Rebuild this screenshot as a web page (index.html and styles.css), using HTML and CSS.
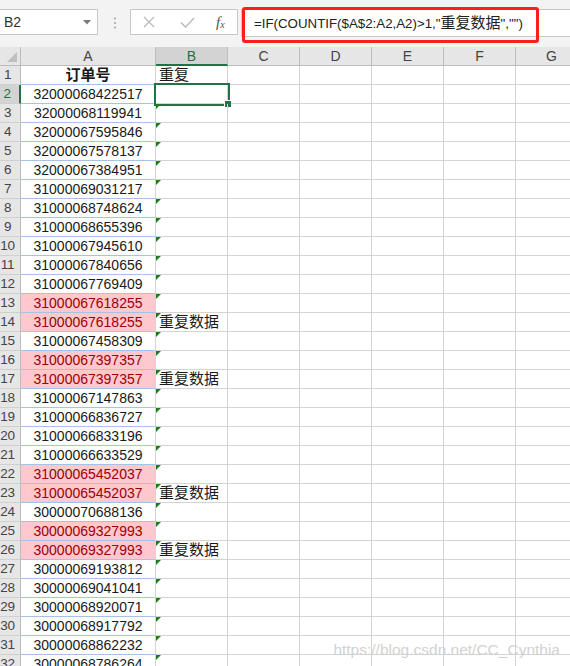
FILE: index.html
```html
<!DOCTYPE html>
<html lang="zh">
<head>
<meta charset="utf-8">
<title>Excel</title>
<link rel="stylesheet" href="styles.css">
</head>
<body>
<div class="app">
  <div class="toolbar">
    <div class="namebox">
      <span>B2</span>
      <svg class="caret" width="8" height="5" viewBox="0 0 8 5"><polygon points="0,0 8,0 4,4.5" fill="#7a7a7a"/></svg>
    </div>
    <svg class="dots" width="4" height="12" viewBox="0 0 4 12"><circle cx="2" cy="1.5" r="1.1" fill="#a8a8a8"/><circle cx="2" cy="6" r="1.1" fill="#a8a8a8"/><circle cx="2" cy="10.5" r="1.1" fill="#a8a8a8"/></svg>
    <div class="actions">
      <svg class="ico" width="12" height="12" viewBox="0 0 12 12"><path d="M1 1 L11 11 M11 1 L1 11" stroke="#bdbdbd" stroke-width="1.4" fill="none"/></svg>
      <svg class="ico" width="15" height="11" viewBox="0 0 15 11"><path d="M1 5.5 L5.5 10 L14 1" stroke="#bdbdbd" stroke-width="1.5" fill="none"/></svg>
      <span class="fx">f<sub>x</sub></span>
    </div>
    <div class="formula">=IF(COUNTIF($A$2:A2,A2)&gt;1,"<span class="cjk">重复数据</span>","")</div>
    <div class="annot"></div>
  </div>

  <div class="sheet">
    <div class="r hdr"><div class="h corner"></div><div class="a">A</div><div class="b on">B</div><i>C</i><i>D</i><i>E</i><i>F</i><i>G</i></div>
    <div class="r"><div class="h">1</div><div class="a title">订单号</div><div class="b">重复</div><i></i><i></i><i></i><i></i><i></i></div>
    <div class="r"><div class="h on">2</div><div class="a">32000068422517</div><div class="b sel"></div><i></i><i></i><i></i><i></i><i></i></div>
    <div class="r"><div class="h">3</div><div class="a">32000068119941</div><div class="b t"></div><i></i><i></i><i></i><i></i><i></i></div>
    <div class="r"><div class="h">4</div><div class="a">32000067595846</div><div class="b t"></div><i></i><i></i><i></i><i></i><i></i></div>
    <div class="r"><div class="h">5</div><div class="a">32000067578137</div><div class="b t"></div><i></i><i></i><i></i><i></i><i></i></div>
    <div class="r"><div class="h">6</div><div class="a">32000067384951</div><div class="b t"></div><i></i><i></i><i></i><i></i><i></i></div>
    <div class="r"><div class="h">7</div><div class="a">31000069031217</div><div class="b t"></div><i></i><i></i><i></i><i></i><i></i></div>
    <div class="r"><div class="h">8</div><div class="a">31000068748624</div><div class="b t"></div><i></i><i></i><i></i><i></i><i></i></div>
    <div class="r"><div class="h">9</div><div class="a">31000068655396</div><div class="b t"></div><i></i><i></i><i></i><i></i><i></i></div>
    <div class="r"><div class="h">10</div><div class="a">31000067945610</div><div class="b t"></div><i></i><i></i><i></i><i></i><i></i></div>
    <div class="r"><div class="h">11</div><div class="a">31000067840656</div><div class="b t"></div><i></i><i></i><i></i><i></i><i></i></div>
    <div class="r"><div class="h">12</div><div class="a">31000067769409</div><div class="b t"></div><i></i><i></i><i></i><i></i><i></i></div>
    <div class="r"><div class="h">13</div><div class="a dup">31000067618255</div><div class="b t"></div><i></i><i></i><i></i><i></i><i></i></div>
    <div class="r"><div class="h">14</div><div class="a dup">31000067618255</div><div class="b t">重复数据</div><i></i><i></i><i></i><i></i><i></i></div>
    <div class="r"><div class="h">15</div><div class="a">31000067458309</div><div class="b t"></div><i></i><i></i><i></i><i></i><i></i></div>
    <div class="r"><div class="h">16</div><div class="a dup">31000067397357</div><div class="b t"></div><i></i><i></i><i></i><i></i><i></i></div>
    <div class="r"><div class="h">17</div><div class="a dup">31000067397357</div><div class="b t">重复数据</div><i></i><i></i><i></i><i></i><i></i></div>
    <div class="r"><div class="h">18</div><div class="a">31000067147863</div><div class="b t"></div><i></i><i></i><i></i><i></i><i></i></div>
    <div class="r"><div class="h">19</div><div class="a">31000066836727</div><div class="b t"></div><i></i><i></i><i></i><i></i><i></i></div>
    <div class="r"><div class="h">20</div><div class="a">31000066833196</div><div class="b t"></div><i></i><i></i><i></i><i></i><i></i></div>
    <div class="r"><div class="h">21</div><div class="a">31000066633529</div><div class="b t"></div><i></i><i></i><i></i><i></i><i></i></div>
    <div class="r"><div class="h">22</div><div class="a dup">31000065452037</div><div class="b t"></div><i></i><i></i><i></i><i></i><i></i></div>
    <div class="r"><div class="h">23</div><div class="a dup">31000065452037</div><div class="b t">重复数据</div><i></i><i></i><i></i><i></i><i></i></div>
    <div class="r"><div class="h">24</div><div class="a">30000070688136</div><div class="b t"></div><i></i><i></i><i></i><i></i><i></i></div>
    <div class="r"><div class="h">25</div><div class="a dup">30000069327993</div><div class="b t"></div><i></i><i></i><i></i><i></i><i></i></div>
    <div class="r"><div class="h">26</div><div class="a dup">30000069327993</div><div class="b t">重复数据</div><i></i><i></i><i></i><i></i><i></i></div>
    <div class="r"><div class="h">27</div><div class="a">30000069193812</div><div class="b t"></div><i></i><i></i><i></i><i></i><i></i></div>
    <div class="r"><div class="h">28</div><div class="a">30000069041041</div><div class="b t"></div><i></i><i></i><i></i><i></i><i></i></div>
    <div class="r"><div class="h">29</div><div class="a">30000068920071</div><div class="b t"></div><i></i><i></i><i></i><i></i><i></i></div>
    <div class="r"><div class="h">30</div><div class="a">30000068917792</div><div class="b t"></div><i></i><i></i><i></i><i></i><i></i></div>
    <div class="r"><div class="h">31</div><div class="a">30000068862232</div><div class="b t"></div><i></i><i></i><i></i><i></i><i></i></div>
    <div class="r"><div class="h">32</div><div class="a">30000068786264</div><div class="b t"></div><i></i><i></i><i></i><i></i><i></i></div>
  </div>

  <div class="watermark">https://blog.csdn.net/CC_Cynthia</div>
</div>
</body>
</html>
```

FILE: styles.css
```css
html, body {
  margin: 0;
  padding: 0;
  background: #ffffff;
}
body {
  font-family: "Liberation Sans", "Noto Sans CJK SC", sans-serif;
  color: #222;
}
.app {
  position: relative;
  width: 570px;
  height: 666px;
  overflow: hidden;
}

/* formula bar */
.toolbar {
  position: relative;
  height: 47px;
  box-sizing: border-box;
  padding-top: 9px;
  background: #f3f3f3;
  display: flex;
  align-items: flex-start;
}
.namebox {
  width: 98px;
  height: 26px;
  box-sizing: border-box;
  background: #fff;
  border: 1px solid #c8c8c8;
  border-left: none;
  display: flex;
  align-items: center;
  justify-content: space-between;
  padding: 0 6px 0 4px;
  font-size: 14px;
  color: #333;
}
.caret { margin-top: 1px; }
.dots {
  margin: 8px 0 0 15px;
}
.actions {
  margin-left: 13px;
  width: 108px;
  height: 26px;
  box-sizing: border-box;
  background: #fff;
  border: 1px solid #c8c8c8;
  display: flex;
  align-items: center;
  padding-left: 12px;
}
.actions .ico:nth-child(1) { margin-right: 25px; }
.actions .ico:nth-child(2) { margin-right: 21px; }
.fx {
  font-family: "Liberation Serif", "DejaVu Serif", serif;
  font-style: italic;
  font-size: 15px;
  color: #555;
  line-height: 1;
}
.fx sub {
  font-size: 10px;
  vertical-align: -1px;
}
.formula {
  margin-left: 3px;
  flex: 1;
  height: 28px;
  box-sizing: border-box;
  background: #fff;
  border: 1px solid #c8c8c8;
  border-right: none;
  padding-left: 12px;
  font-size: 13.3px;
  line-height: 26px;
  color: #222;
  white-space: nowrap;
}
.formula .cjk {
  font-size: 15px;
}
.annot {
  position: absolute;
  left: 242px;
  top: 7px;
  width: 297px;
  height: 36px;
  box-sizing: border-box;
  border: 3px solid #fe1e1e;
  border-radius: 3px;
}

/* sheet grid */
.sheet {
  margin-left: -8px;
  width: 600px;
}
.r {
  display: flex;
  height: 19px;
}
.r > * {
  box-sizing: border-box;
  height: 19px;
  border-right: 1px solid #d4d4d4;
  border-bottom: 1px solid #d4d4d4;
  font-size: 14px;
  line-height: 18px;
  white-space: nowrap;
  flex: none;
}
.r > .h {
  width: 29px;
  padding-left: 3px;
  background: #e6e6e6;
  border-right-color: #bcbcbc;
  border-bottom-color: #d0d0d0;
  text-align: center;
  color: #444;
  font-size: 13.5px;
  letter-spacing: -0.3px;
}
.r > .h.on {
  background: #d3d3d3;
  color: #217346;
  border-right: 2px solid #217346;
}
.r > .a {
  width: 135px;
  text-align: center;
  border-bottom-color: #a7c2e8;
  color: #1a1a1a;
}
.r > .a.title {
  font-weight: bold;
  font-size: 15px;
}
.r > .a.dup {
  background: #ffc7ce;
  color: #9c0006;
}
.r > .b {
  width: 72px;
  padding-left: 3px;
  font-size: 15px;
  position: relative;
  color: #1a1a1a;
}
.r > i {
  width: 72px;
  font-style: normal;
}

/* header row */
.r.hdr > * {
  background: #e6e6e6;
  border-right-color: #bcbcbc;
  border-bottom-color: #bcbcbc;
  text-align: center;
  color: #444;
  font-size: 14px;
  padding-left: 0;
}
.r.hdr > .corner {
  position: relative;
}
.r.hdr > .corner::after {
  content: "";
  position: absolute;
  right: 3px;
  bottom: 3px;
  width: 0;
  height: 0;
  border-left: 10px solid transparent;
  border-bottom: 10px solid #bfbfbf;
}
.r.hdr > .b.on {
  background: #d3d3d3;
  color: #217346;
  border-bottom: 2px solid #217346;
}

/* error indicator triangles */
.b.t::before {
  content: "";
  position: absolute;
  left: 0;
  top: 0;
  width: 0;
  height: 0;
  border-top: 5px solid #1a7d1a;
  border-right: 5px solid transparent;
}

/* active cell */
.b.sel::before {
  content: "";
  position: absolute;
  left: -2px;
  top: -2px;
  right: -3px;
  bottom: -3px;
  border: 2px solid #217346;
}
.b.sel::after {
  content: "";
  position: absolute;
  right: -4px;
  bottom: -4px;
  width: 6px;
  height: 6px;
  background: #217346;
  box-shadow: -1px -1px 0 0 #ffffff;
}

.watermark {
  position: absolute;
  right: 10px;
  bottom: 7px;
  font-size: 15.5px;
  line-height: 18px;
  color: #d2d2d2;
  white-space: nowrap;
}
```
